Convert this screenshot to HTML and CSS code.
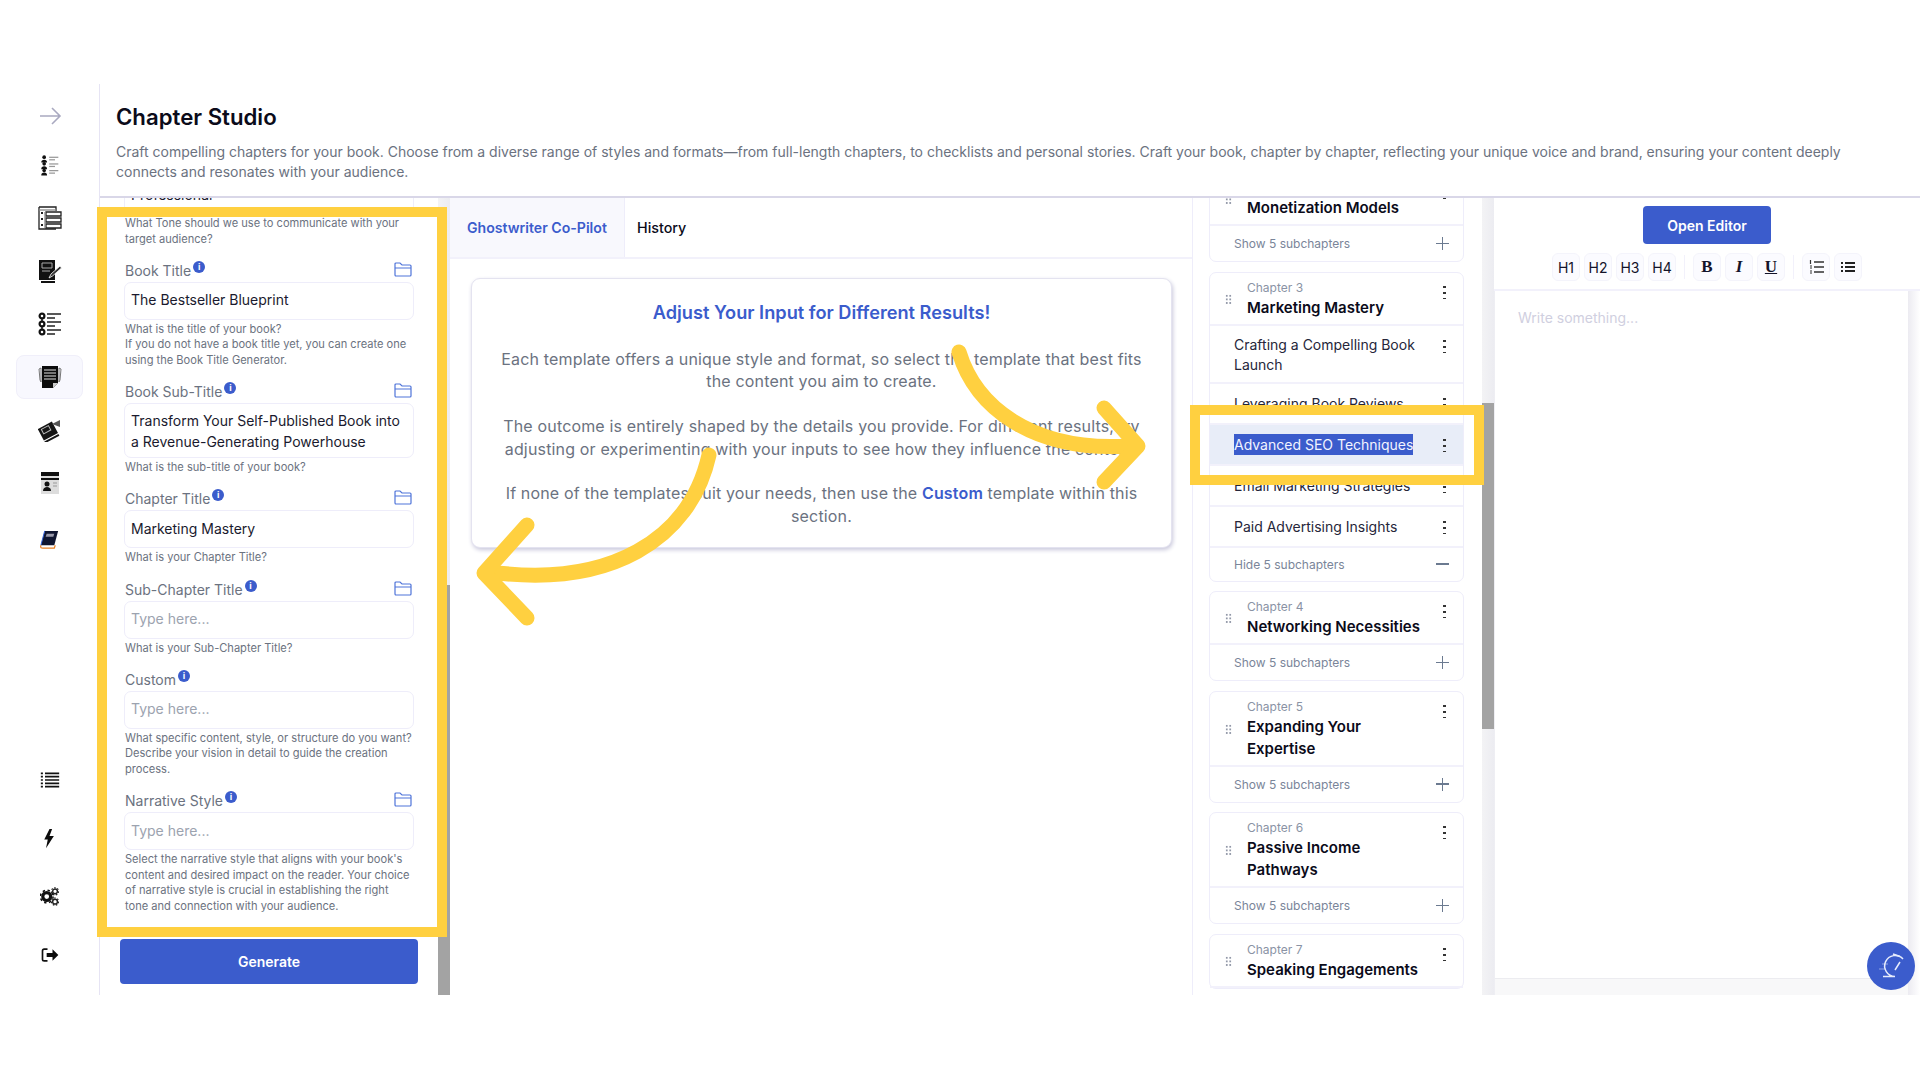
FILE: index.html
```html
<!DOCTYPE html>
<html lang="en">
  <head>
    <meta charset="UTF-8" />
    <meta name="viewport" content="width=device-width, initial-scale=1.0" />
    <title>Chapter Studio</title>
    <link rel="stylesheet" href="styles.css">
  </head>
  <body>
    <div class="app">
      <nav class="sidebar">
        <a class="side-link arrow-link">
          <svg width="24" height="24" viewBox="0 0 24 24" fill="none" stroke="#a9a9c0" stroke-width="1.6"><path d="M2 12h20M14 4l8 8-8 8"/></svg>
        </a>
        <a class="side-link">
          <svg width="20" height="24" viewBox="0 0 24 24"><g fill="#111"><circle cx="5" cy="2.6" r="2.2"/><path d="M1.5 9c0-2.4 1.4-3.4 3.5-3.4S8.500 6.600 8.500 9z"/><circle cx="5" cy="10.600" r="2.200"/><path d="M1.500 17c0-2.400 1.400-3.400 3.500-3.400s3.500 1 3.500 3.400z"/><circle cx="5" cy="18.600" r="2.200"/><path d="M1.500 24.500c0-2.400 1.400-3.400 3.500-3.400s3.500 1 3.500 3.400z"/></g><g fill="#999"><rect x="11" y="2" width="11" height="1.500"/><rect x="11" y="5" width="7" height="1.500"/><rect x="11" y="10" width="11" height="1.500"/><rect x="11" y="13" width="7" height="1.500"/><rect x="11" y="18" width="11" height="1.500"/><rect x="11" y="21" width="7" height="1.500"/></g></svg>
        </a>
        <a class="side-link">
          <svg width="24" height="24" viewBox="0 0 24 24" fill="none" stroke="#222" stroke-width="1.300"><path d="M1 1h17v4M1 1v22h17"/><path d="M1 4h17" stroke="#888"/><path d="M8 6h15v4H8zM8 12h15v4H8zM8 18h15v4H8z"/><path d="M3 7h2M3 13h2M3 19h2" stroke-width="2"/><path d="M7 6v16" stroke="#888"/></svg>
        </a>
        <a class="side-link">
          <svg width="24" height="24" viewBox="0 0 24 24"><path d="M1 1h16v20H1z" fill="#111"/><path d="M3 23h14" stroke="#111" stroke-width="2"/><path d="M4 4h10v5H4z" fill="none" stroke="#aaa" stroke-width="1"/><path d="M4 12h8" stroke="#aaa"/><path d="M11 19l2-4 9-8 1.500 2-9 8z" fill="#333" stroke="#fff" stroke-width=".8"/></svg>
        </a>
        <a class="side-link">
          <svg width="24" height="24" viewBox="0 0 24 24"><path d="M4 3v18" stroke="#111" stroke-width="1.500"/><g fill="#fff" stroke="#111" stroke-width="2.200"><circle cx="4" cy="4" r="2.400"/><circle cx="4" cy="12" r="2.400"/><circle cx="4" cy="20" r="2.400"/></g><g stroke="#222" stroke-width="1.500"><path d="M9 2h14M9 6h8M9 10h14M9 14h8M9 18h14M9 22h8"/></g></svg>
        </a>
        <a class="side-link active">
          <svg width="24" height="24" viewBox="0 0 24 24"><path d="M3 3L1 4l1 11 1 2zM21 3l2 1-1 11-1 2z" fill="none" stroke="#777" stroke-width="1"/><path d="M4 1h16v17l-5 5H4z" fill="#0c0c0c"/><g stroke="#999" stroke-width="1.400"><path d="M6 5h12M6 8h12M6 11h12M6 14h12"/></g><path d="M15 23v-5h5" fill="#ccc"/></svg>
        </a>
        <a class="side-link">
          <svg width="24" height="24" viewBox="0 0 24 24"><g transform="rotate(-28 11 13)"><path d="M2 6h16v13H2z" fill="#151515"/><path d="M2 21h16" stroke="#151515" stroke-width="2"/><path d="M5 8h8v5H5z" fill="none" stroke="#bbb"/></g><path d="M14 6l8-4v7z" fill="#555"/></svg>
        </a>
        <a class="side-link">
          <svg width="24" height="24" viewBox="0 0 24 24"><path d="M3 1h18v22H3z" fill="#ddd"/><path d="M3 1h18v4H3zM3 7h18v2H3z" fill="#111"/><circle cx="9" cy="13" r="2.500" fill="#111"/><path d="M5 20c0-3 2-4 4-4s4 1 4 4z" fill="#111"/><path d="M15 12h4M15 15h4" stroke="#999"/></svg>
        </a>
        <a class="side-link book-link">
          <svg width="23" height="23" viewBox="0 0 24 24"><path d="M7 3h14l-4 15H3z" fill="#0f1530"/><path d="M7 3L3 18" stroke="#2f5fd8" stroke-width="1"/><path d="M3 18c-1 3 1 3 2 3h12l1-3" fill="none" stroke="#e67e22" stroke-width="1.300"/><path d="M9 6h8l-1 3H8z" fill="#99a"/></svg>
        </a>
        <div class="side-bottom">
          <a class="side-link">
            <svg width="20" height="20" viewBox="0 0 24 24"><g stroke="#111" stroke-width="2"><path d="M6 4h17M6 8h17M6 12h17M6 16h17M6 20h17"/><path d="M1 4h2.500M1 8h2.500M1 12h2.500M1 16h2.500M1 20h2.500"/></g></svg>
          </a>
          <a class="side-link">
            <svg width="21" height="21" viewBox="0 0 24 24"><path d="M12 1L6 13h4l-2 10 9-14h-5l3-8z" fill="#0c0c0c"/></svg>
          </a>
          <a class="side-link">
            <svg width="19" height="19" viewBox="0 0 24 24"><circle cx="8.500" cy="12" r="5" fill="none" stroke="#111" stroke-width="4"/><circle cx="8.500" cy="12" r="8" fill="none" stroke="#111" stroke-width="2" stroke-dasharray="3 3.300"/><circle cx="19" cy="5.500" r="3" fill="none" stroke="#222" stroke-width="1.800"/><circle cx="19" cy="5.500" r="4.600" fill="none" stroke="#222" stroke-width="1.400" stroke-dasharray="2 2"/><circle cx="19" cy="18.500" r="3" fill="none" stroke="#222" stroke-width="1.800"/><circle cx="19" cy="18.500" r="4.600" fill="none" stroke="#222" stroke-width="1.400" stroke-dasharray="2 2"/></svg>
          </a>
          <a class="side-link">
            <svg width="20" height="20" viewBox="0 0 24 24"><path d="M9 5H5a2 2 0 0 0-2 2v10a2 2 0 0 0 2 2h4" fill="none" stroke="#111" stroke-width="2"/><path d="M8 9.500h7V5l7 7-7 7v-4.500H8z" fill="#0c0c0c"/></svg>
          </a>
        </div>
      </nav>

      <main class="studio">
        <header class="page-head">
          <h1>Chapter Studio</h1>
          <p>Craft compelling chapters for your book. Choose from a diverse range of styles and formats—from full-length chapters, to checklists and personal stories. Craft your book, chapter by chapter, reflecting your unique voice and brand, ensuring your content deeply connects and resonates with your audience.</p>
        </header>

        <div class="columns">
          <section class="form-col">
            <div class="form-scroll">
              <input class="text-in first-in" type="text" value="Professional" />
              <p class="help first-help">What Tone should we use to communicate with your target audience?</p>

              <div class="field">
                <div class="label-row">
                  <label>Book Title</label><span class="info">i</span>
                  <svg class="folder" width="18" height="15" viewBox="0 0 18 15" fill="none" stroke="#4f74d9" stroke-width="1.200"><path d="M1 13V2a1 1 0 0 1 1-1h4l2 2h8a1 1 0 0 1 1 1v9a1 1 0 0 1-1 1H2a1 1 0 0 1-1-1zM1 6h16"/></svg>
                </div>
                <input class="text-in" type="text" value="The Bestseller Blueprint" />
                <p class="help">What is the title of your book?<br />If you do not have a book title yet, you can create one using the Book Title Generator.</p>
              </div>

              <div class="field">
                <div class="label-row">
                  <label>Book Sub-Title</label><span class="info">i</span>
                  <svg class="folder" width="18" height="15" viewBox="0 0 18 15" fill="none" stroke="#4f74d9" stroke-width="1.200"><path d="M1 13V2a1 1 0 0 1 1-1h4l2 2h8a1 1 0 0 1 1 1v9a1 1 0 0 1-1 1H2a1 1 0 0 1-1-1zM1 6h16"/></svg>
                </div>
                <textarea class="text-area" rows="2">Transform Your Self-Published Book into a Revenue-Generating Powerhouse</textarea>
                <p class="help">What is the sub-title of your book?</p>
              </div>

              <div class="field">
                <div class="label-row">
                  <label>Chapter Title</label><span class="info">i</span>
                  <svg class="folder" width="18" height="15" viewBox="0 0 18 15" fill="none" stroke="#4f74d9" stroke-width="1.200"><path d="M1 13V2a1 1 0 0 1 1-1h4l2 2h8a1 1 0 0 1 1 1v9a1 1 0 0 1-1 1H2a1 1 0 0 1-1-1zM1 6h16"/></svg>
                </div>
                <input class="text-in" type="text" value="Marketing Mastery" />
                <p class="help">What is your Chapter Title?</p>
              </div>

              <div class="field">
                <div class="label-row">
                  <label>Sub-Chapter Title</label><span class="info">i</span>
                  <svg class="folder" width="18" height="15" viewBox="0 0 18 15" fill="none" stroke="#4f74d9" stroke-width="1.200"><path d="M1 13V2a1 1 0 0 1 1-1h4l2 2h8a1 1 0 0 1 1 1v9a1 1 0 0 1-1 1H2a1 1 0 0 1-1-1zM1 6h16"/></svg>
                </div>
                <input class="text-in" type="text" placeholder="Type here..." />
                <p class="help">What is your Sub-Chapter Title?</p>
              </div>

              <div class="field">
                <div class="label-row">
                  <label>Custom</label><span class="info">i</span>
                </div>
                <input class="text-in" type="text" placeholder="Type here..." />
                <p class="help">What specific content, style, or structure do you want? Describe your vision in detail to guide the creation process.</p>
              </div>

              <div class="field">
                <div class="label-row">
                  <label>Narrative Style</label><span class="info">i</span>
                  <svg class="folder" width="18" height="15" viewBox="0 0 18 15" fill="none" stroke="#4f74d9" stroke-width="1.200"><path d="M1 13V2a1 1 0 0 1 1-1h4l2 2h8a1 1 0 0 1 1 1v9a1 1 0 0 1-1 1H2a1 1 0 0 1-1-1zM1 6h16"/></svg>
                </div>
                <input class="text-in" type="text" placeholder="Type here..." />
                <p class="help">Select the narrative style that aligns with your book's content and desired impact on the reader. Your choice of narrative style is crucial in establishing the right tone and connection with your audience.</p>
              </div>

              <button class="generate">Generate</button>
            </div>
            <div class="scrollbar form-bar"><div class="thumb"></div></div>
          </section>

          <section class="copilot">
            <div class="tabs">
              <a class="tab tab-on">Ghostwriter Co-Pilot</a>
              <a class="tab">History</a>
            </div>
            <div class="tip-card">
              <h3>Adjust Your Input for Different Results!</h3>
              <p>Each template offers a unique style and format, so select the template that best fits the content you aim to create.</p>
              <p>The outcome is entirely shaped by the details you provide. For different results, try adjusting or experimenting with your inputs to see how they influence the content.</p>
              <p>If none of the templates suit your needs, then use the <b>Custom</b> template within this section.</p>
            </div>
          </section>

          <section class="outline-col">
            <div class="outline">
              <div class="ch-card">
                <div class="ch-head">
                  <span class="grip"></span>
                  <div class="ch-text"><span>Chapter 2</span><h4>Monetization Models</h4></div>
                  <span class="kebab"></span>
                </div>
                <div class="toggle-row"><span>Show 5 subchapters</span><i class="plus"></i></div>
              </div>

              <div class="ch-card">
                <div class="ch-head">
                  <span class="grip"></span>
                  <div class="ch-text"><span>Chapter 3</span><h4>Marketing Mastery</h4></div>
                  <span class="kebab"></span>
                </div>
                <div class="sub-row tall"><span>Crafting a Compelling Book Launch</span><i class="kebab"></i></div>
                <div class="sub-row"><span>Leveraging Book Reviews</span><i class="kebab"></i></div>
                <div class="sub-row picked"><span><mark>Advanced SEO Techniques</mark></span><i class="kebab"></i></div>
                <div class="sub-row"><span>Email Marketing Strategies</span><i class="kebab"></i></div>
                <div class="sub-row"><span>Paid Advertising Insights</span><i class="kebab"></i></div>
                <div class="toggle-row short"><span>Hide 5 subchapters</span><i class="minus"></i></div>
              </div>

              <div class="ch-card">
                <div class="ch-head">
                  <span class="grip"></span>
                  <div class="ch-text"><span>Chapter 4</span><h4>Networking Necessities</h4></div>
                  <span class="kebab"></span>
                </div>
                <div class="toggle-row"><span>Show 5 subchapters</span><i class="plus"></i></div>
              </div>

              <div class="ch-card">
                <div class="ch-head">
                  <span class="grip"></span>
                  <div class="ch-text"><span>Chapter 5</span><h4>Expanding Your Expertise</h4></div>
                  <span class="kebab"></span>
                </div>
                <div class="toggle-row"><span>Show 5 subchapters</span><i class="plus"></i></div>
              </div>

              <div class="ch-card">
                <div class="ch-head">
                  <span class="grip"></span>
                  <div class="ch-text"><span>Chapter 6</span><h4>Passive Income Pathways</h4></div>
                  <span class="kebab"></span>
                </div>
                <div class="toggle-row"><span>Show 5 subchapters</span><i class="plus"></i></div>
              </div>

              <div class="ch-card">
                <div class="ch-head">
                  <span class="grip"></span>
                  <div class="ch-text"><span>Chapter 7</span><h4>Speaking Engagements</h4></div>
                  <span class="kebab"></span>
                </div>
              </div>
            </div>
            <div class="scrollbar outline-bar"><div class="thumb"></div></div>
          </section>

          <section class="editor-col">
            <div class="editor-top">
              <button class="open-editor">Open Editor</button>
              <div class="toolbar">
                <button class="tool">H1</button>
                <button class="tool">H2</button>
                <button class="tool">H3</button>
                <button class="tool">H4</button>
                <span class="tool-sep"></span>
                <button class="tool serif"><b>B</b></button>
                <button class="tool serif"><b><i>I</i></b></button>
                <button class="tool serif"><b><u>U</u></b></button>
                <span class="tool-sep"></span>
                <button class="tool">
                  <svg width="15" height="14" viewBox="0 0 15 14" fill="none" stroke="#333" stroke-width="1.500"><path d="M5 2h10M5 7h10M5 12h10"/><path d="M1.500 0v4M1 6h2M1 8h2M1 11h2M1 13h2" stroke-width="1.200"/></svg>
                </button>
                <button class="tool">
                  <svg width="14" height="12" viewBox="0 0 14 12" fill="none" stroke="#222" stroke-width="2"><path d="M4 2h10M4 6h10M4 10h10M0 2h2M0 6h2M0 10h2"/></svg>
                </button>
              </div>
            </div>
            <div class="editor-body">
              <div class="editor-page">
                <div class="editor-text">Write something...</div>
                <div class="editor-foot"></div>
              </div>
              <div class="editor-gutter"></div>
            </div>
          </section>
        </div>
      </main>
    </div>

    <!-- annotations drawn over the app -->
    <div class="mark-box mark-form"></div>
    <div class="mark-box mark-row"></div>
    <svg class="arrows" width="1920" height="1080" viewBox="0 0 1920 1080" fill="none" stroke="#ffd040" stroke-width="15" stroke-linecap="round" stroke-linejoin="round">
      <path d="M959 352C975 405 1030 452 1128 446"/>
      <path d="M1104 408L1138 446L1104 482"/>
      <path d="M709 455C690 540 610 588 490 572"/>
      <path d="M527 525L484 573L527 618"/>
    </svg>
    <button class="help-fab">
      <svg width="48" height="48" viewBox="0 0 48 48" fill="none" stroke="#e6ecfc" stroke-width="1.500"><path d="M36 17A10.500 10.500 0 1 0 28 34.500H16"/><path d="M26 12l7 2.500M33 20l-5 8"/><path d="M15 22h6M12 27h7" stroke-width="1" opacity=".5"/></svg>
    </button>
  </body>
</html>
```

FILE: styles.css
```css
* {
  margin: 0;
  padding: 0;
  box-sizing: border-box;
  font-family: "Inter", "Liberation Sans", sans-serif;
}
body {
  height: 1080px;
  background: #fff;
  overflow: hidden;
  position: relative;
}
.app {
  display: flex;
  height: 911px;
  margin-top: 84px;
}

/* sidebar */
.sidebar {
  width: 100px;
  flex: none;
  border-right: 1px solid #e6e4f4;
  display: flex;
  flex-direction: column;
  align-items: center;
  gap: 9px;
  padding: 14px 0 18px;
}
.side-link {
  width: 67px;
  height: 44px;
  flex: none;
  display: flex;
  align-items: center;
  justify-content: center;
  border-radius: 8px;
}
.arrow-link {
  height: 36px;
}
.book-link {
  margin-top: 3px;
}
.side-link.active {
  background: #f8f8fe;
  border: 1px solid #f0effa;
}
.side-bottom {
  margin-top: auto;
  display: flex;
  flex-direction: column;
  gap: 14.5px;
}

/* page header */
.studio {
  flex: 1;
  min-width: 0;
  display: flex;
  flex-direction: column;
}
.page-head {
  height: 114px;
  flex: none;
  padding: 18.5px 60px 0 16px;
  border-bottom: 2px solid #d9d7e8;
}
.page-head h1 {
  font-size: 22.2px;
  line-height: 28px;
  font-weight: 600;
  color: #0b0b1a;
}
.page-head p {
  margin-top: 11.5px;
  font-size: 14px;
  line-height: 20px;
  color: #6b7280;
}
.columns {
  flex: 1;
  min-height: 0;
  display: flex;
}

/* form */
.form-col {
  width: 350px;
  flex: none;
  display: flex;
}
.form-scroll {
  width: 338px;
  flex: none;
  overflow: hidden;
  padding-left: 24px;
}
.first-in {
  margin-top: -22px;
}
.first-help {
  margin-top: 4px;
}
.field {
  margin-top: 12.6px;
  width: 290px;
}
.label-row {
  display: flex;
  height: 22px;
  padding-left: 1px;
}
.label-row label {
  font-size: 14px;
  line-height: 22px;
  color: #6b7280;
}
.info {
  width: 12px;
  height: 12px;
  margin: 1px 0 0 2px;
  border-radius: 50%;
  background: #3b5ccc;
  color: #fff;
  font-size: 9px;
  line-height: 12px;
  font-weight: 700;
  text-align: center;
}
.folder {
  margin: 2px 2px 0 auto;
}
.text-in,
.text-area {
  display: block;
  width: 290px;
  border: 1.5px solid #eeedfa;
  border-radius: 7px;
  background: #fff;
  outline: none;
  color: #1a1a2e;
  font-size: 14px;
  padding: 0 6px;
}
.text-in {
  height: 38px;
  padding-bottom: 2px;
}
.text-area {
  height: 55px;
  line-height: 21px;
  padding: 5.5px 6px;
  resize: none;
  overflow: hidden;
}
.text-in::placeholder {
  color: #9ca3af;
}
.help {
  margin-top: 2px;
  width: 290px;
  padding-left: 1px;
  font-size: 11.1px;
  line-height: 15.6px;
  color: #6b7280;
}
.generate {
  display: block;
  width: 298px;
  height: 45px;
  margin: 24.6px 0 0 -4px;
  border: 0;
  border-radius: 4px;
  background: #3b5ccc;
  color: #fff;
  font-size: 14px;
  font-weight: 600;
}
.scrollbar {
  width: 12px;
  flex: none;
  display: flex;
  flex-direction: column;
  background: linear-gradient(to right, #f3f3f5, #ececf1);
}
.form-bar {
  justify-content: flex-end;
}
.form-bar .thumb {
  height: 410px;
  background: #a3a3a3;
}

/* middle column */
.copilot {
  width: 743px;
  flex: none;
  border-right: 1px solid #eeedfa;
}
.tabs {
  display: flex;
  height: 61px;
  border-bottom: 2px solid #f2f1fb;
}
.tab {
  display: flex;
  align-items: center;
  padding: 0 12px;
  font-size: 14.3px;
  font-weight: 500;
  color: #0b0b1a;
}
.tab-on {
  width: 175px;
  padding: 0 0 0 17px;
  background: #f8f8fd;
  border-right: 1px solid #eeedfa;
  color: #3b5ccc;
  font-size: 14.1px;
  font-weight: 600;
}
.tip-card {
  width: 701px;
  margin: 19px 0 0 21px;
  padding: 22px 24px 20px;
  border: 1.5px solid #e4e3f0;
  border-radius: 9px;
  box-shadow: 1px 2px 4px #c9c8dc;
  background: #fff;
  text-align: center;
}
.tip-card h3 {
  font-size: 18.2px;
  line-height: 22px;
  font-weight: 600;
  color: #3b5ccc;
  margin-bottom: 25px;
}
.tip-card p {
  font-size: 16px;
  letter-spacing: .16px;
  line-height: 22.4px;
  color: #6b7280;
  margin-bottom: 22.4px;
}
.tip-card p:last-child {
  margin-bottom: 0;
}
.tip-card b {
  color: #3b5ccc;
  font-weight: 600;
}

/* chapters */
.outline-col {
  width: 301px;
  flex: none;
  display: flex;
}
.outline {
  width: 289px;
  flex: none;
  overflow: hidden;
  padding-left: 16px;
}
.outline-bar .thumb {
  height: 326px;
  margin-top: 205px;
  background: #a3a3a3;
}
.ch-card {
  width: 255px;
  margin-bottom: 9.5px;
  border: 1px solid #eeedfa;
  border-radius: 7px;
}
.ch-card:first-child {
  margin-top: -26px;
}
.ch-head {
  display: flex;
  align-items: center;
  padding: 7px 0 5px 15px;
  border-bottom: 2px solid #f2f1fb;
}
.grip {
  width: 7px;
  height: 11px;
  flex: none;
  background: radial-gradient(circle, #9298a8 .9px, transparent 1.2px) 0 0 / 3.5px 3.6px;
}
.ch-text {
  width: 178px;
  margin-left: 15px;
}
.ch-text span {
  display: block;
  font-size: 12px;
  line-height: 15px;
  color: #8a93a5;
}
.ch-text h4 {
  margin-top: 2px;
  font-size: 15px;
  line-height: 22px;
  font-weight: 600;
  color: #0b0b1a;
}
.kebab {
  width: 3px;
  height: 15px;
  flex: none;
  background: radial-gradient(circle, #333 1.2px, transparent 1.5px) 0 0 / 3px 6px;
}
.ch-head .kebab {
  margin-left: auto;
  margin-right: 17px;
  align-self: flex-start;
  margin-top: 4px;
}
.toggle-row,
.sub-row {
  display: flex;
  align-items: center;
  justify-content: space-between;
  padding: 0 17px 0 24px;
}
.toggle-row {
  height: 35px;
  font-size: 12px;
  color: #7a8599;
}
.toggle-row.short {
  height: 33px;
}
.sub-row {
  height: 41px;
  border-bottom: 2px solid #f2f1fb;
  font-size: 14px;
  color: #26263a;
}
.sub-row.tall {
  height: 58px;
  align-items: flex-start;
  padding-top: 9px;
  line-height: 20px;
}
.sub-row.tall .kebab {
  margin-top: 3px;
}
.sub-row span {
  width: 192px;
}
.sub-row.picked {
  background: #e8edf8;
}
.sub-row mark {
  background: #3b5ccc;
  color: #f2f4ff;
  padding: 2px 0;
}
.plus,
.minus {
  position: relative;
  width: 13px;
  height: 13px;
  margin-right: -3px;
}
.plus::before,
.minus::before {
  content: "";
  position: absolute;
  left: 0;
  top: 5.5px;
  width: 13px;
  height: 1.5px;
  background: #6b7a90;
}
.plus::after {
  content: "";
  position: absolute;
  left: 5.5px;
  top: 0;
  width: 1.5px;
  height: 13px;
  background: #6b7a90;
}

/* editor */
.editor-col {
  flex: 1;
  min-width: 0;
  display: flex;
  flex-direction: column;
}
.editor-top {
  height: 93px;
  flex: none;
  display: flex;
  flex-direction: column;
  align-items: center;
  padding-top: 8px;
  border-bottom: 2px solid #f2f1fb;
}
.open-editor {
  width: 128px;
  height: 38px;
  flex: none;
  border: 0;
  border-radius: 4px;
  background: #3b5ccc;
  color: #fff;
  font-size: 14px;
  font-weight: 600;
}
.toolbar {
  display: flex;
  align-items: center;
  gap: 4px;
  margin-top: 9px;
}
.tool {
  width: 28px;
  height: 28px;
  display: flex;
  align-items: center;
  justify-content: center;
  border: 1px solid #f4f4fb;
  border-radius: 6px;
  background: #fbfbff;
  color: #14142a;
  font-size: 14px;
}
.serif,
.serif * {
  font-family: "Liberation Serif", serif;
  font-size: 17px;
}
.tool-sep {
  width: 1px;
  height: 24px;
  margin: 0 4px;
  background: #f2f1fb;
}
.editor-body {
  flex: 1;
  min-height: 0;
  display: flex;
}
.editor-page {
  flex: 1;
  display: flex;
  flex-direction: column;
  border-left: 1px solid #eeeef3;
}
.editor-text {
  flex: 1;
  padding: 17.5px 23px;
  font-size: 14px;
  line-height: 18px;
  color: #d0cfe0;
}
.editor-foot {
  height: 17px;
  background: #f8f8f9;
  border-top: 1px solid #ececf0;
}
.editor-gutter {
  width: 12px;
  flex: none;
  background: linear-gradient(to right, #ecebf1, #fff);
}

/* yellow annotations */
.mark-box {
  position: absolute;
  border: 10px solid #ffd040;
}
.mark-form {
  left: 97px;
  top: 207px;
  width: 350px;
  height: 730px;
}
.mark-row {
  left: 1190px;
  top: 405px;
  width: 294px;
  height: 80px;
}
.arrows {
  position: absolute;
  left: 0;
  top: 0;
  pointer-events: none;
}
.help-fab {
  position: absolute;
  left: 1867px;
  top: 942px;
  width: 48px;
  height: 48px;
  border: 0;
  border-radius: 50%;
  background: #3b5ccc;
}
```
